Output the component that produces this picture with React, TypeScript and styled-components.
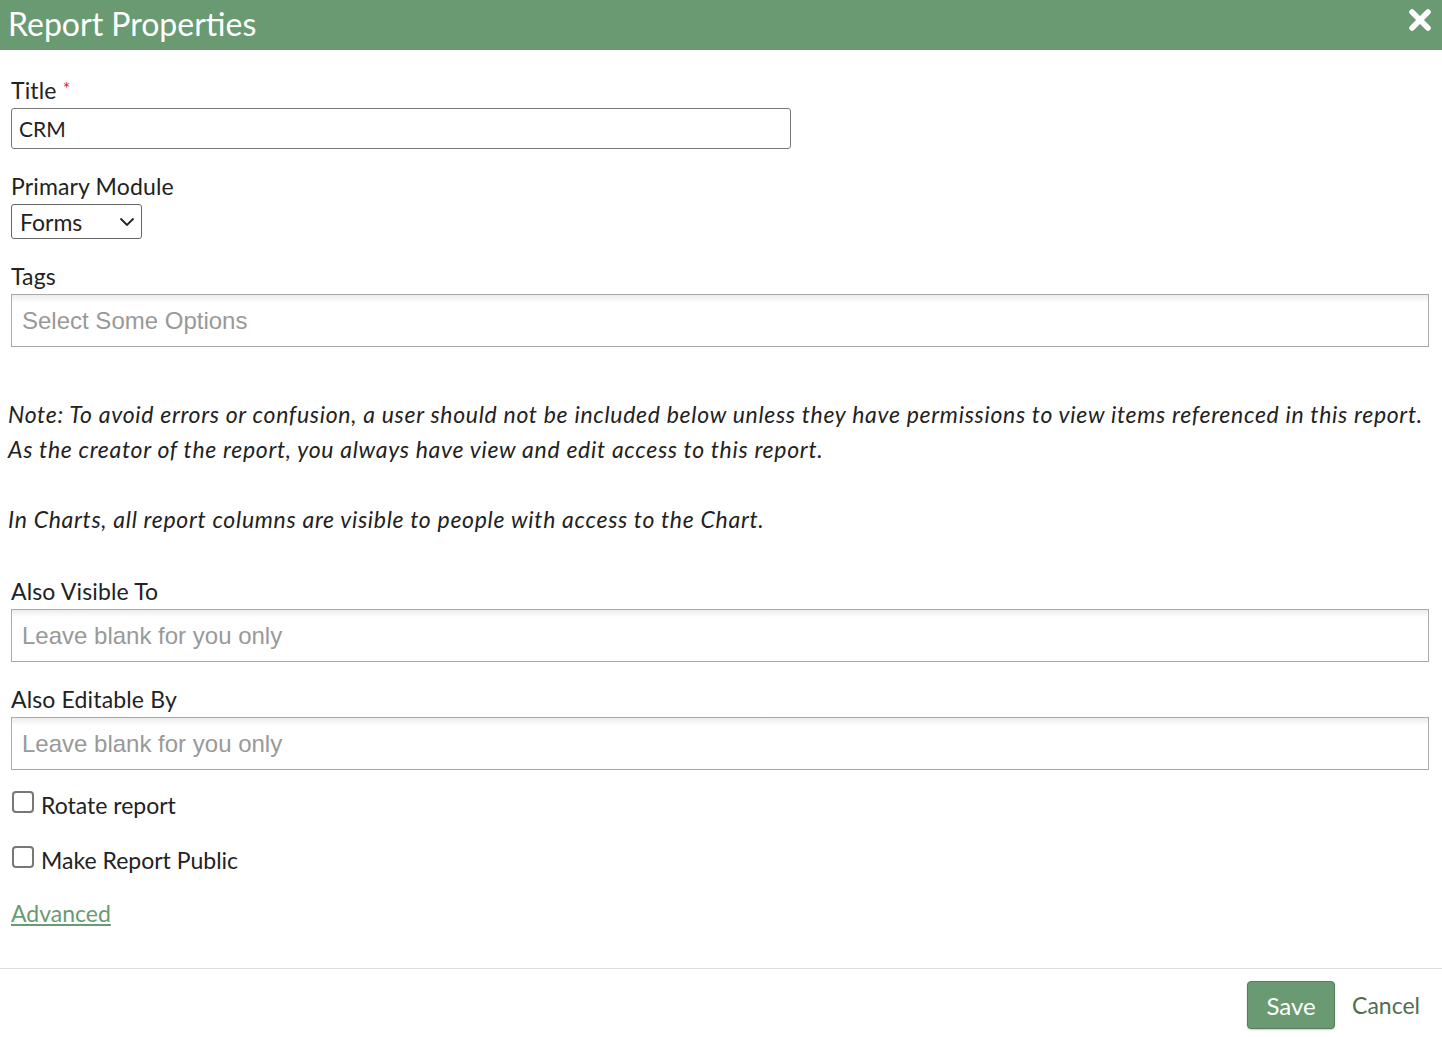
import React, { useEffect, useRef, useState } from 'react';
import styled, { createGlobalStyle } from 'styled-components';

const GlobalStyle = createGlobalStyle`
  html, body {
    margin: 0;
    padding: 0;
    background: #fff;
  }
  body {
    font-family: Lato, "Noto Sans", sans-serif;
    color: #222;
  }
`;

const green = '#6a9a72';

function App() {
  const [title, setTitle] = useState('CRM');
  const [rotate, setRotate] = useState(false);
  const [isPublic, setIsPublic] = useState(false);
  const titleRef = useRef<HTMLInputElement>(null);

  // caret sits at the start of the title, like the dialog just opened
  useEffect(() => {
    const el = titleRef.current;
    if (el) {
      el.focus();
      el.setSelectionRange(0, 0);
    }
  }, []);

  return (
    <>
      <GlobalStyle />
      <Dialog>
        <Header>
          <HeaderTitle>Report Properties</HeaderTitle>
          <CloseButton type="button" aria-label="Close">
            <svg width="24" height="24" viewBox="0 0 24 24">
              <path
                d="M4 4 L20 20 M20 4 L4 20"
                stroke="#fff"
                strokeWidth="5.5"
                strokeLinecap="round"
              />
            </svg>
          </CloseButton>
        </Header>

        <Body>
          <Field>
            <Label>
              Title <Required>*</Required>
            </Label>
            <TextInput
              ref={titleRef}
              value={title}
              onChange={(e) => setTitle(e.target.value)}
            />
          </Field>

          <Field>
            <Label>Primary Module</Label>
            <SelectBox>
              <span>Forms</span>
              <svg width="16" height="10" viewBox="0 0 16 10">
                <path d="M1.5 1.5 L8 8 L14.5 1.5" fill="none" stroke="#222" strokeWidth="1.8" />
              </svg>
            </SelectBox>
          </Field>

          <Field>
            <Label>Tags</Label>
            <ChosenBox>Select Some Options</ChosenBox>
          </Field>

          <Notes>
            <Note>
              Note: To avoid errors or confusion, a user should not be included below unless they
              have permissions to view items referenced in this report.
              <br />
              As the creator of the report, you always have view and edit access to this report.
            </Note>
            <Note>In Charts, all report columns are visible to people with access to the Chart.</Note>
          </Notes>

          <Field>
            <Label>Also Visible To</Label>
            <ChosenBox>Leave blank for you only</ChosenBox>
          </Field>

          <Field>
            <Label>Also Editable By</Label>
            <ChosenBox>Leave blank for you only</ChosenBox>
          </Field>

          <CheckRow>
            <Checkbox type="checkbox" checked={rotate} onChange={() => setRotate(!rotate)} />
            Rotate report
          </CheckRow>
          <CheckRow>
            <Checkbox type="checkbox" checked={isPublic} onChange={() => setIsPublic(!isPublic)} />
            Make Report Public
          </CheckRow>

          <AdvancedLink href="#">Advanced</AdvancedLink>
        </Body>

        <Footer>
          <SaveButton type="button">Save</SaveButton>
          <CancelButton type="button">Cancel</CancelButton>
        </Footer>
      </Dialog>
    </>
  );
}

export default App;

const Dialog = styled.div`
  width: 1442px;
  min-height: 1037px;
  display: flex;
  flex-direction: column;
`;

const Header = styled.div`
  height: 50px;
  background: ${green};
  display: flex;
  align-items: center;
  justify-content: space-between;
  padding: 0 10px 0 8px;
`;

const HeaderTitle = styled.h1`
  margin: -3px 0 0;
  font-size: 32px;
  font-weight: 400;
  color: #fff;
`;

const CloseButton = styled.button`
  border: none;
  background: none;
  padding: 0;
  display: flex;
  margin-top: -10px;
  cursor: pointer;
`;

const Body = styled.div`
  padding: 26px 13px 0 11px;
  display: flex;
  flex-direction: column;
`;

const Field = styled.div`
  display: flex;
  flex-direction: column;
  margin-bottom: 23px;
`;

const Label = styled.label`
  font-size: 23px;
  letter-spacing: 0.15px;
  line-height: 28px;
  margin-bottom: 4px;
  color: #222;
`;

const Required = styled.span`
  color: #e3232c;
  font-size: 18px;
  vertical-align: top;
  position: relative;
  top: -2px;
`;

const TextInput = styled.input`
  width: 780px;
  height: 41px;
  box-sizing: border-box;
  border: 1px solid #777;
  border-radius: 3px;
  padding: 0 7px;
  font-family: Lato, "Noto Sans", sans-serif;
  font-size: 21px;
  color: #222;
  caret-color: #111;
  outline: none;
`;

const SelectBox = styled.div`
  width: 131px;
  height: 35px;
  box-sizing: border-box;
  border: 1px solid #666;
  border-radius: 3px;
  display: flex;
  align-items: center;
  justify-content: space-between;
  padding: 0 6px 0 8px;
  font-size: 23px;
`;

const ChosenBox = styled.div`
  height: 53px;
  box-sizing: border-box;
  border: 1px solid #aaa;
  background: linear-gradient(#eee 1%, #fff 15%);
  display: flex;
  align-items: center;
  padding: 0 10px;
  font-family: "Liberation Sans", Arial, sans-serif;
  font-size: 24px;
  color: #999;
`;

const Notes = styled.div`
  margin: 27px 0 5px -3px;
`;

const Note = styled.p`
  margin: 0 0 35px;
  font-style: italic;
  font-size: 23px;
  letter-spacing: 0.7px;
  line-height: 35px;
  color: #222;
  white-space: nowrap;
`;

const CheckRow = styled.label`
  display: flex;
  align-items: center;
  gap: 7px;
  font-size: 23px;
  height: 24px;
  margin-bottom: 31px;
`;

const Checkbox = styled.input`
  appearance: none;
  width: 22px;
  height: 22px;
  margin: -6px 0 0 1px;
  border: 2px solid #777;
  border-radius: 4px;
  background: #fff;
`;

const AdvancedLink = styled.a`
  align-self: flex-start;
  font-size: 23px;
  color: ${green};
  text-decoration: underline;
  margin-top: -4px;
`;

const Footer = styled.div`
  margin-top: 41px;
  border-top: 1px solid #ddd;
  display: flex;
  justify-content: flex-end;
  align-items: center;
  gap: 17px;
  padding: 12px 22px 0 0;
`;

const SaveButton = styled.button`
  width: 88px;
  height: 48px;
  background: ${green};
  border: 1px solid #557c5c;
  border-radius: 4px;
  color: #fff;
  font-family: Lato, "Noto Sans", sans-serif;
  font-size: 24px;
  box-shadow: 0 1px 2px rgba(0, 0, 0, 0.2);
  cursor: pointer;
`;

const CancelButton = styled.button`
  background: none;
  border: none;
  padding: 0;
  font-family: Lato, "Noto Sans", sans-serif;
  font-size: 23px;
  color: #4e6e54;
  cursor: pointer;
`;
